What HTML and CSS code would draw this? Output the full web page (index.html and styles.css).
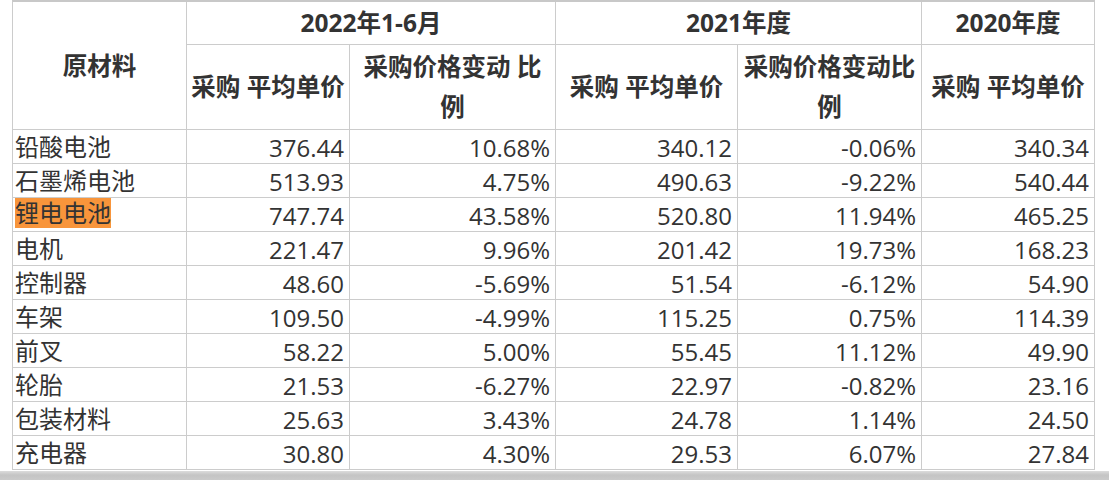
FILE: index.html
```html
<!DOCTYPE html>
<html lang="zh-CN">
<head>
<meta charset="utf-8">
<title>原材料采购价格</title>
<link rel="stylesheet" href="styles.css">
</head>
<body>
<div class="page">
  <table class="grid">
    <colgroup>
      <col class="c1"><col class="c2"><col class="c3"><col class="c4"><col class="c5"><col class="c6">
    </colgroup>
    <thead>
      <tr class="h1">
        <th rowspan="2" class="name-head">原材料</th>
        <th colspan="2">2022年1-6月</th>
        <th colspan="2">2021年度</th>
        <th>2020年度</th>
      </tr>
      <tr class="h2">
        <th>采购 平均单价</th>
        <th>采购价格变动 比<br>例</th>
        <th>采购 平均单价</th>
        <th>采购价格变动比<br>例</th>
        <th>采购 平均单价</th>
      </tr>
    </thead>
    <tbody>
      <tr><td class="name">铅酸电池</td><td>376.44</td><td>10.68%</td><td>340.12</td><td>-0.06%</td><td>340.34</td></tr>
      <tr><td class="name">石墨烯电池</td><td>513.93</td><td>4.75%</td><td>490.63</td><td>-9.22%</td><td>540.44</td></tr>
      <tr><td class="name"><span class="mark">锂电电池</span></td><td>747.74</td><td>43.58%</td><td>520.80</td><td>11.94%</td><td>465.25</td></tr>
      <tr><td class="name">电机</td><td>221.47</td><td>9.96%</td><td>201.42</td><td>19.73%</td><td>168.23</td></tr>
      <tr><td class="name">控制器</td><td>48.60</td><td>-5.69%</td><td>51.54</td><td>-6.12%</td><td>54.90</td></tr>
      <tr><td class="name">车架</td><td>109.50</td><td>-4.99%</td><td>115.25</td><td>0.75%</td><td>114.39</td></tr>
      <tr><td class="name">前叉</td><td>58.22</td><td>5.00%</td><td>55.45</td><td>11.12%</td><td>49.90</td></tr>
      <tr><td class="name">轮胎</td><td>21.53</td><td>-6.27%</td><td>22.97</td><td>-0.82%</td><td>23.16</td></tr>
      <tr><td class="name">包装材料</td><td>25.63</td><td>3.43%</td><td>24.78</td><td>1.14%</td><td>24.50</td></tr>
      <tr><td class="name">充电器</td><td>30.80</td><td>4.30%</td><td>29.53</td><td>6.07%</td><td>27.84</td></tr>
    </tbody>
  </table>
  <div class="shadow"></div>
</div>
</body>
</html>
```

FILE: styles.css
```css
* { box-sizing: border-box; }
html, body {
  margin: 0;
  padding: 0;
  background: #ffffff;
}
.page {
  width: 1109px;
  height: 480px;
  overflow: hidden;
  display: flex;
  flex-direction: column;
}
.grid {
  margin-left: 12px;
  width: 1083px;
  table-layout: fixed;
  border-collapse: separate;
  border-spacing: 0;
  border-left: 1px solid #cccccc;
  border-top: 2px solid #c8c8c8;
  font-family: "Open Sans", "Noto Sans CJK SC", sans-serif;
  font-size: 24px;
  color: #333333;
}
.c1 { width: 174px; }
.c2 { width: 163px; }
.c3 { width: 206px; }
.c4 { width: 182px; }
.c5 { width: 184px; }
.c6 { width: 173px; }
.grid th,
.grid td {
  border-right: 1px solid #cccccc;
  border-bottom: 1px solid #cccccc;
}
.grid th {
  font-weight: 700;
  text-align: center;
  padding: 0 2px;
  line-height: 40px;
  font-size: 24.5px;
}
.h1 th { height: 43px; }
.h2 th { height: 85px; padding-top: 2px; padding-bottom: 2px; }
.grid td {
  height: 34px;
  padding: 2px 5px 0 2px;
  line-height: 31px;
  text-align: right;
  white-space: nowrap;
}
.grid td.name {
  text-align: left;
  padding: 0 2px;
  line-height: 33px;
  vertical-align: top;
}
.mark {
  display: inline-block;
  background: #f8953b;
  line-height: 30px;
  height: 30px;
  vertical-align: top;
}
.shadow {
  margin-top: 1px;
  height: 9px;
  background: linear-gradient(#dcdcdc, #c4c4c4 45%, #cacaca);
}
```
